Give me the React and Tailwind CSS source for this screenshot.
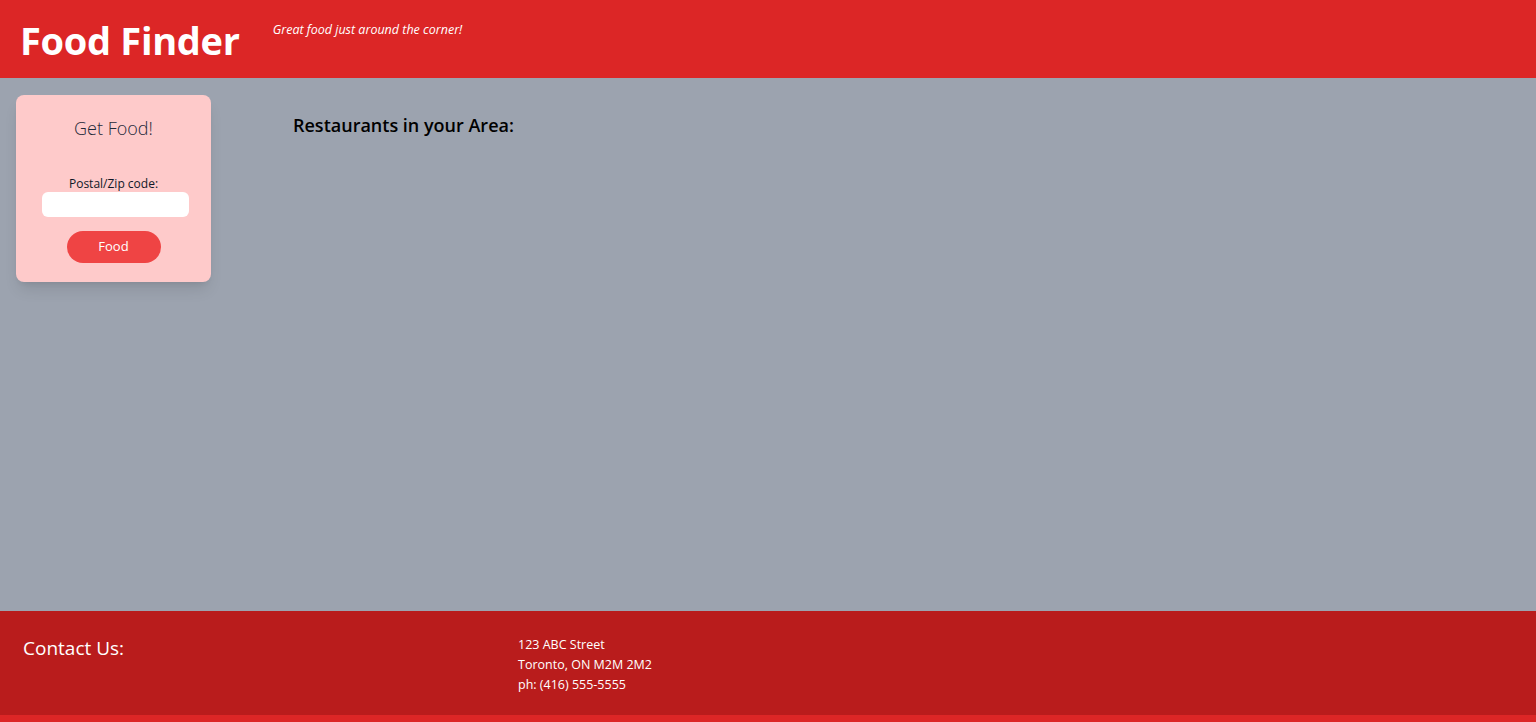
import React from 'react'

const App = () => {
  return (
    <div className="min-h-screen bg-red-600" style={{ fontFamily: '"Open Sans", "Noto Sans", sans-serif' }}>
      {/* Header */}
      <header className="h-[78px] bg-[#dc2626] flex items-start text-white">
        <h1 className="ml-5 mt-[16px] text-[38px] leading-[48px] font-bold tracking-[-0.3px]">Food Finder</h1>
        <p className="ml-[33px] mt-[21px] text-[12.5px] italic">Great food just around the corner!</p>
      </header>

      {/* Main */}
      <main className="h-[533px] bg-[#9ca3af] flex items-start">
        {/* Search card */}
        <div className="ml-4 mt-[17px] w-[195px] h-[187px] rounded-lg bg-[#fecaca] shadow-lg flex flex-col items-center">
          <h2 className="mt-[20px] text-[18px] font-light text-gray-800">Get Food!</h2>
          <label className="mt-[33px] text-[12px] text-gray-900">Postal/Zip code:</label>
          <input type="text" className="ml-1 mt-[-1px] w-[147px] h-[25px] rounded-md bg-white outline-none px-2" />
          <button className="mt-[14px] w-[94px] h-[32px] rounded-full bg-[#ef4444] text-white text-[13px]">Food</button>
        </div>

        {/* Results */}
        <section className="ml-[82px] mt-[34px]">
          <h2 className="text-[18px] font-semibold text-black">Restaurants in your Area:</h2>
        </section>
      </main>

      {/* Footer */}
      <footer className="h-[104px] bg-[#b91c1c] flex items-start text-white">
        <h3 className="ml-[23px] mt-[23px] w-[495px] text-[19px]">Contact Us:</h3>
        <div className="mt-[24px] text-[12.5px] leading-[20px]">
          <p>123 ABC Street</p>
          <p>Toronto, ON M2M 2M2</p>
          <p>ph: (416) 555-5555</p>
        </div>
      </footer>

      <div className="h-[110px] bg-[#dc2626]"></div>
    </div>
  )
}

export default App
